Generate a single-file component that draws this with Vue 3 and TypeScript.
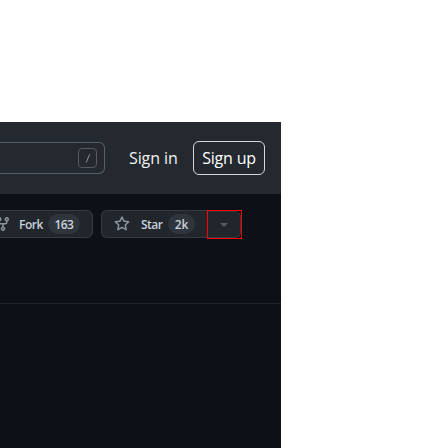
<script setup lang="ts">
const forks: string = '163'
const stars: string = '2k'
</script>

<template>
  <main class="page">
    <header class="header">
      <div class="search"><kbd class="slash"><svg width="18" height="18" viewBox="0 0 18 18"><path d="M10.7 5.3 7.2 13.5" /></svg></kbd></div>
      <a class="sign-in">Sign in</a>
      <a class="sign-up"><span>Sign up</span></a>
    </header>
    <section class="repo-head">
      <div class="btn fork">
        <svg class="icon" width="16" height="16" viewBox="0 0 16 16"><path d="M5 5.372v.878c0 .414.336.75.75.75h4.5a.75.75 0 0 0 .75-.75v-.878a2.25 2.25 0 1 1 1.5 0v.878a2.25 2.25 0 0 1-2.25 2.25h-1.5v2.128a2.251 2.251 0 1 1-1.5 0V8.5h-1.5A2.25 2.25 0 0 1 3.5 6.25v-.878a2.25 2.25 0 1 1 1.5 0ZM5 3.25a.75.75 0 1 0-1.5 0 .75.75 0 0 0 1.5 0Zm6.75.75a.75.75 0 1 0 0-1.5.75.75 0 0 0 0 1.5Zm-3 8.75a.75.75 0 1 0-1.5 0 .75.75 0 0 0 1.5 0Z" /></svg>
        <span class="label fork-label">Fork</span>
        <span class="count fork-count"><span>{{ forks }}</span></span>
      </div>
      <div class="group">
        <div class="btn star">
          <svg class="icon" width="16" height="16" viewBox="0 0 16 16"><path d="M8 .25a.75.75 0 0 1 .673.418l1.882 3.815 4.21.612a.75.75 0 0 1 .416 1.279l-3.046 2.97.719 4.192a.751.751 0 0 1-1.088.791L8 12.347l-3.766 1.98a.75.75 0 0 1-1.088-.79l.72-4.194L.818 6.374a.75.75 0 0 1 .416-1.28l4.21-.611L7.327.668A.75.75 0 0 1 8 .25Zm0 2.445L6.615 5.5a.75.75 0 0 1-.564.41l-3.097.45 2.24 2.184a.75.75 0 0 1 .216.664l-.528 3.084 2.769-1.456a.75.75 0 0 1 .698 0l2.77 1.456-.53-3.084a.75.75 0 0 1 .216-.664l2.24-2.183-3.096-.45a.75.75 0 0 1-.564-.41L8 2.694Z" /></svg>
          <span class="label star-label">Star</span>
          <span class="count star-count"><span>{{ stars }}</span></span>
        </div>
        <div class="highlight">
          <div class="btn caret"><svg width="8" height="4" viewBox="0 0 8 4"><path d="M0 0h8L4 4Z" /></svg></div>
        </div>
      </div>
    </section>
    <section class="content"></section>
  </main>
</template>

<style>
body { background: #fff; }
</style>

<style scoped>
* { box-sizing: border-box; }
.page {
  width: 281px;
  height: 326px;
  margin-top: 122px;
  overflow: hidden;
  display: flex;
  flex-direction: column;
  background: #0d1117;
  font-family: "Open Sans", "Noto Sans", sans-serif;
  white-space: nowrap;
}
.header {
  height: 72px;
  flex: none;
  display: flex;
  align-items: center;
  background: #24292f;
  color: #fff;
  font-size: 16px;
  font-weight: 500;
}
.search {
  width: 105px;
  height: 32px;
  flex: none;
  border: 1px solid #57606a;
  border-left: 0;
  border-radius: 0 6px 6px 0;
  display: flex;
  align-items: center;
  justify-content: flex-end;
  padding-right: 7px;
}
.slash {
  display: block;
  width: 19px;
  height: 20px;
  border: 1px solid #555a60;
  border-radius: 4px;
}
.slash svg { display: block; fill: none; stroke: #8c9095; stroke-width: 1; }
.sign-in { width: 64px; margin-left: 24px; letter-spacing: -0.1px; color: #f0f1f2; }
.sign-up {
  width: 72px;
  height: 34px;
  border: 1px solid #d5d7da;
  border-radius: 6px;
  display: flex;
  align-items: center;
  justify-content: center;
  letter-spacing: -0.2px;
}
.repo-head {
  height: 110px;
  flex: none;
  display: flex;
  align-items: flex-start;
  gap: 8px;
  padding-top: 16px;
  border-bottom: 1px solid #21262d;
}
.btn {
  height: 28px;
  flex: none;
  display: flex;
  align-items: center;
  background: #21262d;
  border: 1px solid #363b42;
  border-radius: 6px;
  color: #c9d1d9;
  font-size: 12px;
  font-weight: 600;
  letter-spacing: -0.5px;
}
.icon { flex: none; fill: #8b949e; }
.fork { width: 111px; margin-left: -18px; padding-left: 12px; }
.label { display: block; flex: none; }
.fork-label { width: 29px; margin-left: 8px; }
.star-label { width: 27px; margin-left: 11px; }
.count {
  height: 20px;
  flex: none;
  display: flex;
  align-items: center;
  justify-content: center;
  border-radius: 10px;
  background: #2f353d;
}
.fork-count { width: 32px; letter-spacing: -0.6px; }
.star-count { width: 27px; letter-spacing: -0.2px; }
.group { display: flex; }
.star { width: 106px; padding-left: 12px; border-radius: 6px 0 0 6px; border-right: 0; }
.highlight { width: 35px; height: 29px; border: 1px solid #f00; }
.caret {
  width: 33px;
  height: 27px;
  border-top-color: #30363d;
  border-left: 0;
  border-radius: 0 6px 6px 0;
  justify-content: center;
}
.caret svg { fill: #545b64; }
.content { flex: 1; }
</style>
